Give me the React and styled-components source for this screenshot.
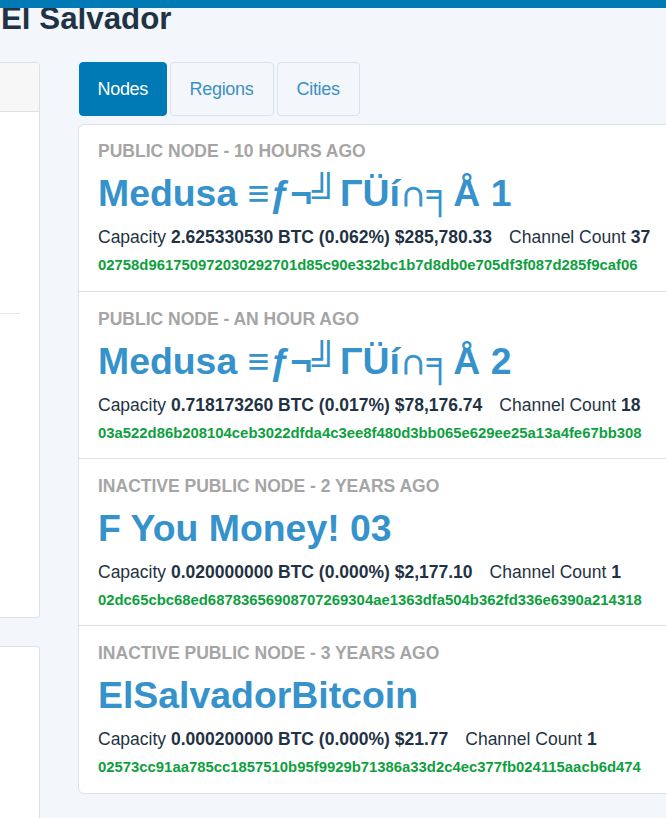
import styled, { createGlobalStyle } from 'styled-components';

const GlobalStyle = createGlobalStyle`
  html, body {
    margin: 0;
    padding: 0;
    height: 100%;
    overflow: hidden;
    background: #f3f7fb;
    font-family: "Liberation Sans", Arial, sans-serif;
    color: #1f3345;
  }
`;

const nodes = [
  {
    label: 'Public node - 10 hours ago',
    name: 'Medusa ≡ƒ¬╝ ΓÜí∩╕Å 1',
    capacity: '2.625330530',
    percent: '0.062',
    usd: '$285,780.33',
    channels: 37,
    pubkey: '02758d961750972030292701d85c90e332bc1b7d8db0e705df3f087d285f9caf06',
  },
  {
    label: 'Public node - an hour ago',
    name: 'Medusa ≡ƒ¬╝ ΓÜí∩╕Å 2',
    capacity: '0.718173260',
    percent: '0.017',
    usd: '$78,176.74',
    channels: 18,
    pubkey: '03a522d86b208104ceb3022dfda4c3ee8f480d3bb065e629ee25a13a4fe67bb308',
  },
  {
    label: 'Inactive public node - 2 years ago',
    name: 'F You Money! 03',
    capacity: '0.020000000',
    percent: '0.000',
    usd: '$2,177.10',
    channels: 1,
    pubkey: '02dc65cbc68ed68783656908707269304ae1363dfa504b362fd336e6390a214318',
  },
  {
    label: 'Inactive public node - 3 years ago',
    name: 'ElSalvadorBitcoin',
    capacity: '0.000200000',
    percent: '0.000',
    usd: '$21.77',
    channels: 1,
    pubkey: '02573cc91aa785cc1857510b95f9929b71386a33d2c4ec377fb024115aacb6d474',
  },
];

// the broken emoji glyphs need a bit of help to sit like the original font
const renderName = name =>
  name.split(/(╝ |∩)/).map((part, i) => {
    if (part === '╝ ') return <span key={i}>╝<NarrowSpace> </NarrowSpace></span>;
    if (part === '∩') return <CapGlyph key={i}>{part}</CapGlyph>;
    return part;
  });

const App = () => (
  <>
    <GlobalStyle />
    <TopBar />
    <Page>
      <Title>El Salvador</Title>
      <Columns>
        <Sidebar>
          <SideCard $height={556}>
            <SideHeader />
            <SideBody>
              <SideRule />
            </SideBody>
          </SideCard>
          <SideCard $height={300} />
        </Sidebar>
        <Main>
          <Tabs>
            <Tab $active>Nodes</Tab>
            <Tab>Regions</Tab>
            <Tab>Cities</Tab>
          </Tabs>
          <NodeList>
            {nodes.map(node => (
              <NodeRow key={node.pubkey}>
                <NodeLabel>{node.label}</NodeLabel>
                <NodeName>{renderName(node.name)}</NodeName>
                <NodeStats>
                  <span>
                    Capacity <b>{node.capacity} BTC ({node.percent}%) {node.usd}</b>
                  </span>
                  <span>
                    Channel Count <b>{node.channels}</b>
                  </span>
                </NodeStats>
                <PubKey>{node.pubkey}</PubKey>
              </NodeRow>
            ))}
          </NodeList>
        </Main>
      </Columns>
    </Page>
  </>
);

export default App;

const TopBar = styled.div`
  position: fixed;
  z-index: 2;
  top: 0;
  left: 0;
  right: 0;
  height: 8px;
  background: #007ab5;
`;

const Page = styled.div`
  width: 666px;
  height: 818px;
  overflow: hidden;
`;

const Title = styled.h1`
  margin: 0;
  padding: 1px 0 0 1px;
  height: 62px;
  box-sizing: border-box;
  font-size: 31.3px;
  line-height: 36px;
  font-weight: 700;
  color: #1f3345;
`;

const Columns = styled.div`
  display: grid;
  grid-template-columns: 40px 720px;
  column-gap: 38px;
`;

const Sidebar = styled.div`
  display: flex;
  flex-direction: column;
  gap: 28px;
`;

const SideCard = styled.div`
  box-sizing: border-box;
  height: ${props => props.$height}px;
  background: #fff;
  border: 1px solid #dbe1e7;
  border-left: 0;
  border-radius: 0 4px 4px 0;
`;

const SideHeader = styled.div`
  height: 48px;
  background: #f7f7f7;
  border-bottom: 1px solid #dfe3e8;
`;

const SideBody = styled.div`
  padding: 201px 19px 0 0;
`;

const SideRule = styled.div`
  height: 1px;
  background: #e3e6ea;
`;

const Main = styled.div`
  display: flex;
  flex-direction: column;
`;

const Tabs = styled.div`
  display: flex;
  gap: 3px;
  padding-left: 1px;
  height: 62px;
`;

const Tab = styled.div`
  box-sizing: border-box;
  height: 54px;
  padding: 0 ${props => (props.$active ? '17.5px' : '19px')};
  display: flex;
  align-items: center;
  font-size: 18px;
  letter-spacing: -0.3px;
  border-radius: 4px;
  border: 1px solid ${props => (props.$active ? '#007ab5' : '#dbe3ea')};
  background: ${props => (props.$active ? '#007ab5' : 'transparent')};
  color: ${props => (props.$active ? '#fff' : '#3d8fc4')};
`;

const NodeList = styled.div`
  padding-bottom: 1px;
  background: #fff;
  border: 1px solid #dbe1e7;
  border-radius: 6px;
`;

const NodeRow = styled.div`
  box-sizing: border-box;
  height: 167px;
  padding: 16px 19px 0;
  border-top: 1px solid #dcdfe3;
  &:first-child {
    height: 166px;
    padding-top: 15px;
    border-top: 0;
  }
`;

const NodeLabel = styled.div`
  font-size: 17.5px;
  line-height: 22px;
  font-weight: 700;
  color: #a5a5a5;
  text-transform: uppercase;
`;

const NodeName = styled.div`
  margin-top: 8px;
  height: 46px;
  font-size: 37.4px;
  line-height: 46px;
  font-weight: 700;
  color: #3592cb;
  white-space: nowrap;
`;

const NarrowSpace = styled.span`
  font-size: 5px;
`;

const CapGlyph = styled.span`
  -webkit-text-stroke: 0.9px #3592cb;
`;

const NodeStats = styled.div`
  display: flex;
  gap: 17px;
  margin-top: 10px;
  font-size: 17.5px;
  line-height: 22px;
  color: #1f3345;
  white-space: nowrap;
  b {
    font-weight: 700;
  }
`;

const PubKey = styled.div`
  margin-top: 8px;
  font-size: 14.87px;
  line-height: 18px;
  font-weight: 700;
  color: #0e9f3e;
  white-space: nowrap;
`;
